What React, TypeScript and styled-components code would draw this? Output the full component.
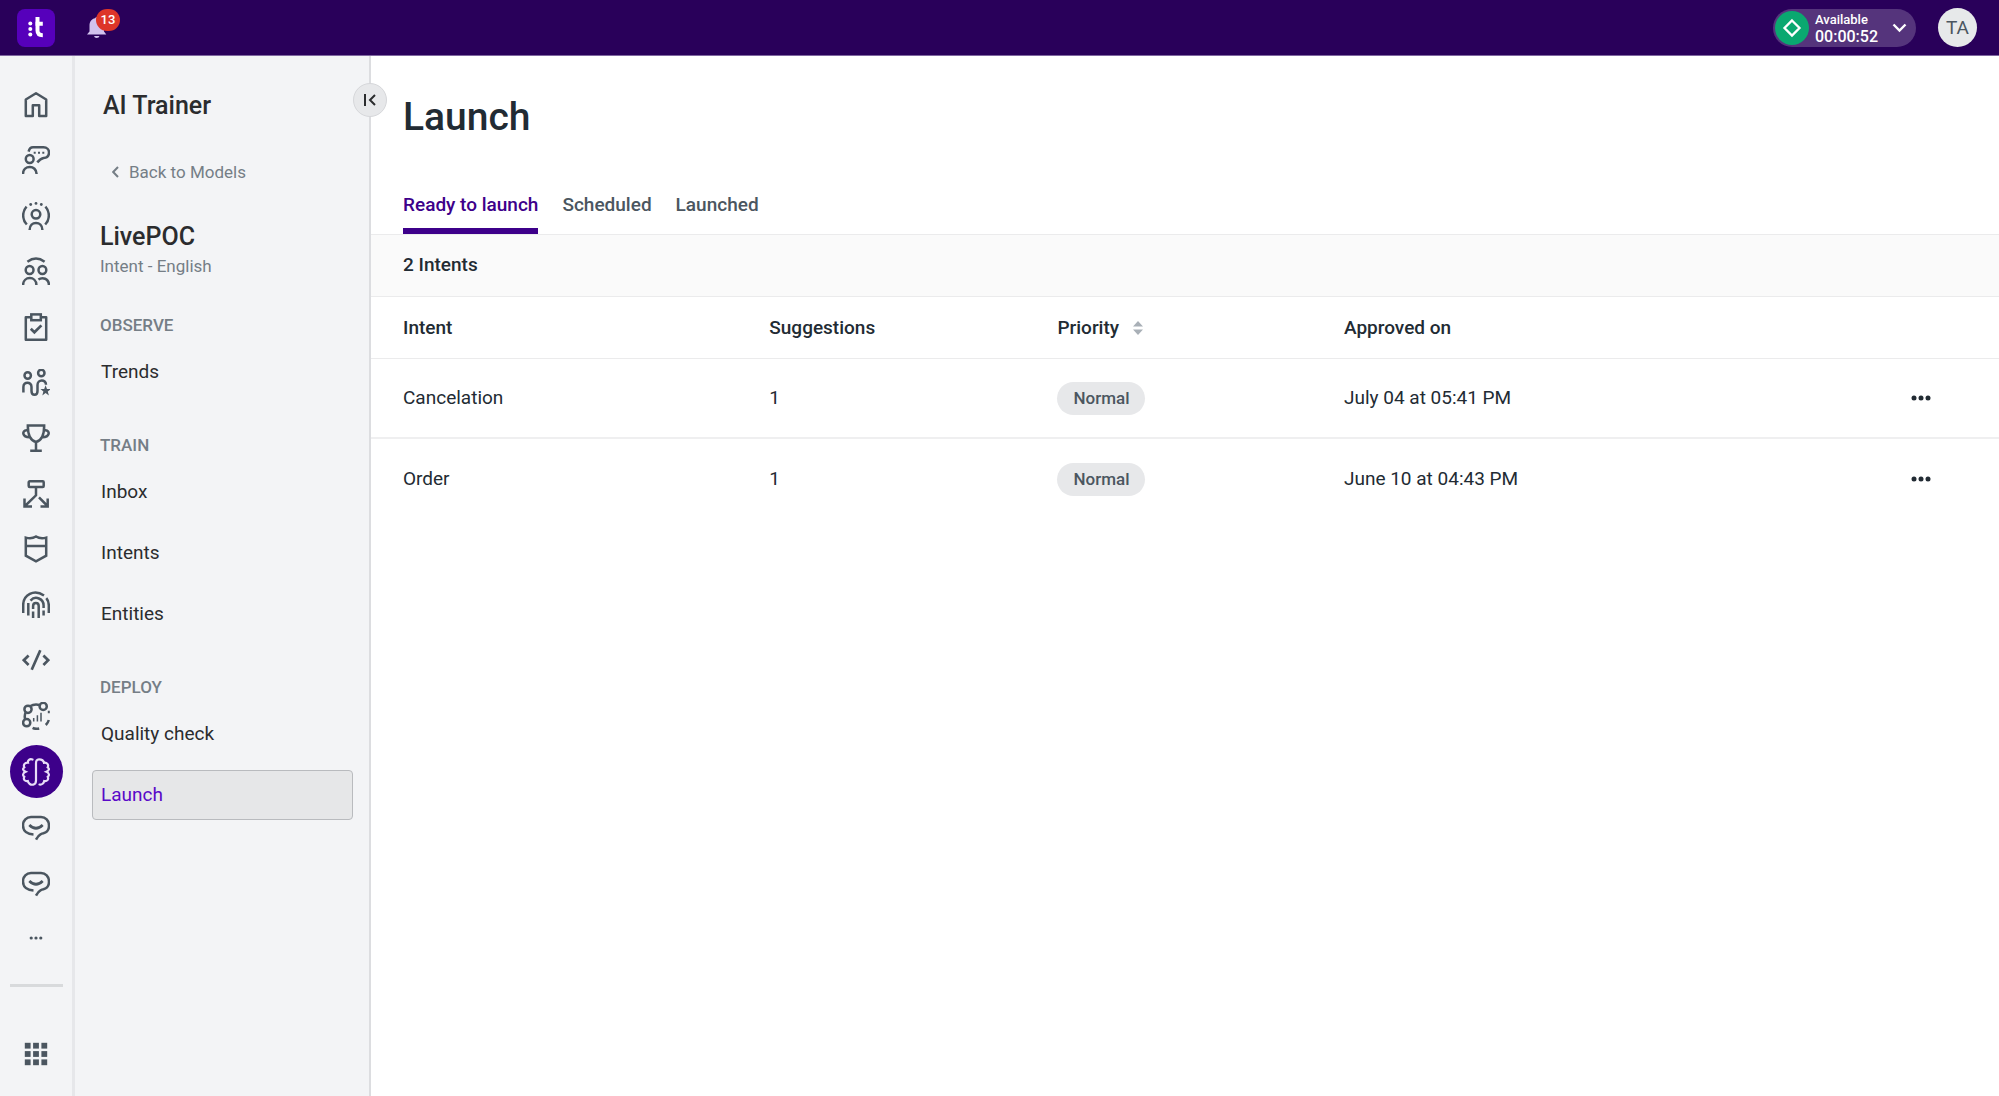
import React from "react";
import styled, { createGlobalStyle } from "styled-components";

const color = {
  header: "#29005a",
  brand: "#3d008a",
  accent: "#5a0ac8",
  panel: "#f3f4f6",
  line: "#ebebec",
  ink: "#222b33",
  text: "#2b2c2e",
  slate: "#4b5660",
  muted: "#757e86",
  chip: "#e7e8ea",
};

const GlobalStyle = createGlobalStyle`
  *, *::before, *::after { box-sizing: border-box; }
  body {
    margin: 0;
    background: #fff;
    color: ${color.ink};
    font-family: Roboto, "Liberation Sans", sans-serif;
    font-size: 19px;
    line-height: 24px;
  }
  button {
    font: inherit;
    color: inherit;
    border: 0;
    padding: 0;
    background: none;
    cursor: pointer;
  }
  a { color: inherit; text-decoration: none; }
  h1, h2, h3, p, ul { margin: 0; padding: 0; }
  ul { list-style: none; }
  svg { display: block; }
`;

const Shell = styled.div`
  display: grid;
  grid-template-rows: 56px 1fr;
  min-height: 100vh;
`;

const TopBar = styled.header`
  display: flex;
  align-items: center;
  justify-content: space-between;
  padding: 0 22px 0 17px;
  background: ${color.header};
  border-bottom: 1px solid #7f66a0;
`;

const TopGroup = styled.div<{ $gap: number }>`
  display: flex;
  align-items: center;
  gap: ${(p) => p.$gap}px;
`;

const Logo = styled.a`
  width: 38px;
  height: 38px;
  border-radius: 8px;
  background: #5600bb;
`;

const BellButton = styled.button`
  position: relative;
  width: 20px;
  height: 38px;
  display: flex;
  align-items: center;
`;

const Badge = styled.span`
  position: absolute;
  left: 9px;
  top: 0;
  width: 24px;
  height: 22px;
  border-radius: 11px;
  background: #dd3529;
  color: #fff;
  font-size: 13px;
  font-weight: 500;
  line-height: 22px;
  text-align: center;
`;

const Status = styled.button`
  display: flex;
  align-items: center;
  height: 38px;
  padding: 0 9px 0 2px;
  border-radius: 19px;
  background: #55347c;
  color: #fff;
  text-align: left;
`;

const StatusDot = styled.span`
  width: 34px;
  height: 34px;
  border-radius: 50%;
  background: #0aa870;
`;

const StatusText = styled.span`
  display: grid;
  width: 64px;
  margin: 0 13px 0 6px;
`;

const StatusLabel = styled.span`
  font-size: 13px;
  font-weight: 500;
  line-height: 17px;
`;

const StatusTime = styled.span`
  font-size: 16px;
  font-weight: 500;
  line-height: 17px;
`;

const Avatar = styled.button`
  width: 39px;
  height: 39px;
  border-radius: 50%;
  background: #e7e9ea;
  color: ${color.slate};
  font-size: 19px;
  text-align: center;
`;

const Body = styled.div`
  display: grid;
  grid-template-columns: 75px 296px 1fr;
`;

const Rail = styled.nav`
  display: flex;
  flex-direction: column;
  align-items: center;
  padding: 21px 0 22px;
  background: ${color.panel};
  border-right: 3px solid #e6e7ea;
  color: ${color.slate};
`;

const RailList = styled.ul`
  flex: 1;
  display: grid;
  grid-auto-rows: 1fr;
  align-items: center;
`;

const RailLink = styled.a<{ $active?: boolean }>`
  display: flex;
  align-items: center;
  justify-content: center;
  width: 53px;
  height: 53px;
  border-radius: 50%;
  background: ${(p) => (p.$active ? color.brand : "transparent")};
  color: ${(p) => (p.$active ? "#e8dcf7" : "inherit")};
`;

const RailDivider = styled.hr`
  width: 53px;
  height: 3px;
  margin: 18px 0 47px;
  border: 0;
  background: #d8dadc;
`;

const AppsButton = styled.button`
  display: flex;
  align-items: center;
  justify-content: center;
  width: 40px;
  height: 40px;
`;

const Side = styled.aside`
  position: relative;
  padding: 36px 16px 36px 17px;
  background: ${color.panel};
  border-right: 2px solid #dcdde0;
`;

const Collapse = styled.button`
  position: absolute;
  top: 27px;
  right: -18px;
  display: flex;
  align-items: center;
  justify-content: center;
  width: 34px;
  height: 34px;
  border: 1px solid #d6d7da;
  border-radius: 50%;
  background: ${color.chip};
  color: ${color.text};
`;

const Heading = styled.h2<{ $indent: number }>`
  padding-left: ${(p) => p.$indent}px;
  color: ${color.text};
  font-size: 25px;
  font-weight: 500;
  line-height: 28px;
`;

const Back = styled.a`
  display: flex;
  align-items: center;
  gap: 10px;
  margin: 41px 0 40px;
  padding-left: 20px;
  color: ${color.muted};
  font-size: 17px;
  line-height: 22px;
`;

const Note = styled.p`
  margin-bottom: 37px;
  padding: 4px 0 0 8px;
  color: ${color.muted};
  font-size: 17px;
  line-height: 22px;
`;

const Section = styled.section`
  display: grid;
  gap: 11px;
  & + & { margin-top: 37px; }
`;

const SectionTitle = styled.h3`
  padding-left: 8px;
  color: ${color.muted};
  font-size: 17px;
  font-weight: 500;
  line-height: 22px;
`;

const SideLink = styled.a<{ $active?: boolean }>`
  display: flex;
  align-items: center;
  height: 50px;
  padding: 0 8px;
  border: 1px solid ${(p) => (p.$active ? "#b9bbbe" : "transparent")};
  border-radius: 4px;
  background: ${(p) => (p.$active ? "#e6e7e8" : "transparent")};
  color: ${(p) => (p.$active ? color.accent : color.text)};
`;

const Main = styled.main`
  min-width: 0;
`;

const Title = styled.h1`
  padding: 37px 32px 0;
  font-size: 39px;
  font-weight: 500;
  line-height: 48px;
`;

const Tabs = styled.div`
  display: flex;
  gap: 24px;
  margin-top: 41px;
  padding: 0 32px;
  border-bottom: 1px solid ${color.line};
`;

const Tab = styled.button<{ $active?: boolean }>`
  height: 52px;
  border-bottom: 6px solid ${(p) => (p.$active ? color.brand : "transparent")};
  color: ${(p) => (p.$active ? color.brand : color.slate)};
  font-weight: 500;
  white-space: nowrap;
`;

const Count = styled.p`
  padding: 18px 32px 19px;
  background: #fafafa;
  border-bottom: 1px solid ${color.line};
  font-weight: 500;
`;

const Table = styled.table`
  width: 100%;
  table-layout: fixed;
  border-collapse: separate;
  border-spacing: 0;
  text-align: left;
`;

const Col = styled.col<{ $share?: number }>`
  width: ${(p) => (p.$share ? `${p.$share}%` : "auto")};
`;

const Th = styled.th`
  height: 62px;
  padding: 0 0 0 32px;
  border-bottom: 1px solid ${color.line};
  font-weight: 500;
`;

const SortButton = styled.button`
  display: flex;
  align-items: center;
  gap: 14px;
`;

const Row = styled.tr`
  &:not(:last-child) > td { border-bottom: 2px solid #efeff0; }
`;

const Td = styled.td<{ $end?: boolean }>`
  height: 80px;
  padding: 0 ${(p) => (p.$end ? 68 : 0)}px 0 32px;
`;

const Chip = styled.span`
  display: inline-block;
  padding: 0 16px;
  border-radius: 17px;
  background: ${color.chip};
  color: ${color.slate};
  font-size: 17px;
  font-weight: 500;
  line-height: 33px;
  vertical-align: middle;
`;

const MoreButton = styled.button`
  display: block;
  margin-left: auto;
  padding: 8px 0;
`;

const Glyph = ({ children, size = 28 }: { children: React.ReactNode; size?: number }) => (
  <svg width={size} height={size} viewBox="0 0 28 28" fill="none" stroke="currentColor" strokeWidth="2.5" aria-hidden="true">
    {children}
  </svg>
);

const chatSmile = (
  <Glyph>
    <path d="M14 26.6Q16 22.6 18.5 21.3Q20 20.6 21.4 20.3C25 19.4 27 16.500 27 12.700C27 7.500 23.500 4 19 4H9C4.500 4 1 7.500 1 12.400C1 17.500 4.500 21 11.500 21.400" />
    <path d="M7.300 12Q14 18.600 20.700 12" strokeWidth="2.700" />
  </Glyph>
);

const railItems: { name: string; active?: boolean; icon: React.ReactNode }[] = [
  {
    name: "Home",
    icon: <Glyph><path d="M3.800 8.500L14 2.300L24.200 8.500V24.900H17.200V14.200H10.800V24.900H3.800Z" strokeLinejoin="round" /></Glyph>,
  },
  {
    name: "Conversations",
    icon: (
      <Glyph>
        <path d="M6.600 5.600Q7.600 1.300 11 1.300H21.500C25 1.300 27 3.700 27 6.500C27 9.500 25 11.800 21.700 12Q18.500 12.400 15.300 16.400" />
        <circle cx="7.700" cy="13" r="3.900" />
        <path d="M1 28C1 18.600 14.600 18.600 14.600 28" />
        <path d="M11.700 6.700h2M16 6.700h2M20.300 6.700h2" strokeWidth="2" />
      </Glyph>
    ),
  },
  {
    name: "Live",
    icon: (
      <Glyph>
        <circle cx="14" cy="12.300" r="4.300" />
        <path d="M7.600 28C7.600 18.500 20.400 18.500 20.400 28M4.600 4.600C0 9.500 0 17.500 4.800 22.500M23.400 4.600C28 9.500 28 17.500 23.200 22.500" />
        <g fill="currentColor" stroke="none"><circle cx="8.700" cy="2.500" r="1.400" /><circle cx="14" cy="1.400" r="1.400" /><circle cx="19.300" cy="2.500" r="1.400" /></g>
      </Glyph>
    ),
  },
  {
    name: "Team",
    icon: (
      <Glyph>
        <path d="M5.400 4.700Q14-1.700 22.600 4.700" />
        <circle cx="7.600" cy="13" r="3.900" /><circle cx="20.400" cy="13" r="3.900" />
        <path d="M1.100 28C1.100 18.800 14.400 18.800 14.400 28M16.400 22.600C20.400 19.600 26.900 21.500 26.900 28" />
      </Glyph>
    ),
  },
  {
    name: "Quality",
    icon: (
      <Glyph>
        <path d="M9.300 4.300H3.800V26.800H24.200V4.300H18.800" strokeLinejoin="round" />
        <rect x="9.300" y="1.400" width="9.500" height="5.800" />
        <path d="M8.800 15.800L12.400 19.300L19.400 12.400" strokeWidth="2.700" />
      </Glyph>
    ),
  },
  {
    name: "Workforce",
    icon: (
      <Glyph>
        <circle cx="5.700" cy="6.500" r="3.200" /><circle cx="19.300" cy="4" r="3.200" />
        <path d="M1.400 23.600V18C1.400 12.200 9.500 12.200 9.500 18V22C9.500 27 15.500 27 15.500 22V16C15.500 10 24 10 24 15.800" />
        <path d="M23.600 16.200L25 20H28.800L25.800 22.400L26.900 26.400L23.600 24.100L20.300 26.400L21.400 22.400L18.400 20H22.200Z" fill="currentColor" stroke="none" />
      </Glyph>
    ),
  },
  {
    name: "Performance",
    icon: (
      <Glyph>
        <path d="M4.600 1.500H23.400M5.800 1.500C5.800 11 8 16.500 14 18C20 16.500 22.200 11 22.200 1.500M14 18V27M8.200 26.700H19.800M6.200 6.200H4.500C-.3 6.800 0 13 7.600 13.200M21.800 6.200H23.500C28.300 6.800 28 13 20.400 13.200" />
      </Glyph>
    ),
  },
  {
    name: "Routing",
    icon: (
      <Glyph>
        <rect x="6.700" y="1.300" width="15" height="5.600" rx="1" />
        <path d="M14 7V15.300L3 26M2.500 18.400V26.400H10M17 17.400L25.500 26M25.700 18.400V26.400H18.500" />
      </Glyph>
    ),
  },
  {
    name: "Guardian",
    icon: (
      <Glyph>
        <path d="M3.800 2.600C8 3.700 11.500 3 14 1.500C16.500 3 20 3.700 24.200 2.600V20.700L14 26.300L3.800 20.700ZM3.800 11H24.200" />
      </Glyph>
    ),
  },
  {
    name: "Identity",
    icon: (
      <Glyph>
        <path d="M1.200 22V14C1.200 4 12-2.500 22 4.600M24.300 7.200Q26.800 10 26.800 14.500V22M6.300 24.400V12M8.500 9.600C13.500 4 21.600 8 21.600 14.500V17M21.600 19.400V24.400M11.100 18V15C11.100 11 16.700 11 16.700 15V27M11.100 20.500V27" />
      </Glyph>
    ),
  },
  {
    name: "Developer",
    icon: <Glyph><path d="M6.600 9.500L1.800 14.200L6.600 19M21.400 9.500L26.200 14.200L21.400 19M18.300 4.300L9.700 23.700" strokeWidth="2.700" /></Glyph>,
  },
  {
    name: "Journeys",
    icon: (
      <Glyph>
        <circle cx="6" cy="7.300" r="3.600" /><circle cx="21.200" cy="4.400" r="3.600" /><circle cx="4.700" cy="20.700" r="3.600" />
        <path d="M8 4.200Q12.500 1.500 17.600 3M3.600 10.400Q2.100 14 3.200 17.300M26.800 18Q26 20.800 23.800 23M17.200 26.500Q13.500 27.400 10.600 25.900M25.800 10h2" />
        <path d="M11.700 16V19.500M15.400 13.200V19.500M19 10.800V19.500" strokeWidth="1.500" />
      </Glyph>
    ),
  },
  {
    name: "AI Trainer",
    active: true,
    icon: (
      <Glyph>
        <path
          strokeWidth="2.200"
          strokeLinecap="round"
          d="M10.500 1.500C7.500.4 5.600 2.600 6 4.600C3 4.300 1 6.800 2.300 9.300C.4 10.600.7 12.600 3.600 13.800C.5 15.200.5 17.600 2.300 18.800C1 21.500 3 23.600 5.800 23C6.300 25.500 8.800 27.300 11.200 26.600C13.500 26 14 24.500 14 22.500V5.500C14 2.800 14.800 1.400 17 1.400C19.500 1.400 21.500 2.200 22 4.800C25 4.300 27 6.800 25.700 9.300C27.600 10.600 27.300 12.600 24.400 13.800C27.500 15.200 27.500 17.600 25.700 18.800C27 21.500 25 23.600 22.200 23C21.800 25.200 20 27 17.500 26.500"
        />
      </Glyph>
    ),
  },
  { name: "Virtual agent", icon: chatSmile },
  { name: "Chatbot", icon: chatSmile },
  {
    name: "More",
    icon: <Glyph><g fill="currentColor" stroke="none"><circle cx="9.200" cy="14" r="1.600" /><circle cx="14" cy="14" r="1.600" /><circle cx="18.800" cy="14" r="1.600" /></g></Glyph>,
  },
];

const sections = [
  { title: "OBSERVE", links: ["Trends"] },
  { title: "TRAIN", links: ["Inbox", "Intents", "Entities"] },
  { title: "DEPLOY", links: ["Quality check", "Launch"] },
];

const intents = [
  { name: "Cancelation", suggestions: 1, priority: "Normal", approved: "July 04 at 05:41 PM" },
  { name: "Order", suggestions: 1, priority: "Normal", approved: "June 10 at 04:43 PM" },
];

export default function App() {
  const [tab, setTab] = React.useState("Ready to launch");
  return (
    <>
      <GlobalStyle />
      <Shell>
        <TopBar>
          <TopGroup $gap={32}>
            <Logo href="#" aria-label="Talkdesk">
              <svg width="38" height="38" viewBox="0 0 38 38" fill="#fff" aria-hidden="true">
                <circle cx="13.300" cy="14.500" r="2" /><circle cx="13.300" cy="20" r="2" /><circle cx="13.300" cy="25.500" r="2" />
                <path d="M20.500 8V21.500Q20.500 26.200 25.800 26.200M18.300 14.700H25.800" fill="none" stroke="#fff" strokeWidth="4" />
              </svg>
            </Logo>
            <BellButton aria-label="Notifications">
              <svg width="20" height="22" viewBox="0 0 20 22" fill="#d2c2ee" aria-hidden="true">
                <path d="M0 17.500L2.500 14.500V8.500C2.500 4.500 5 2 8 1.300C9-.3 11-.3 12 1.300C15 2 17 4.500 17 8.500V14.500L19.300 17.500ZM7 19H12.500Q12 21 9.700 21Q7.500 21 7 19Z" />
              </svg>
              <Badge>13</Badge>
            </BellButton>
          </TopGroup>
          <TopGroup $gap={22}>
            <Status>
              <StatusDot>
                <svg width="34" height="34" viewBox="0 0 34 34" fill="none" stroke="#fff" strokeWidth="2.300" aria-hidden="true">
                  <path d="M17 9.500L24.500 17L17 24.500L9.500 17Z" />
                </svg>
              </StatusDot>
              <StatusText>
                <StatusLabel>Available</StatusLabel>
                <StatusTime>00:00:52</StatusTime>
              </StatusText>
              <svg width="15" height="10" viewBox="0 0 15 10" fill="none" stroke="#fff" strokeWidth="2.400" aria-hidden="true">
                <path d="M1.500 1.500L7.500 7.500L13.500 1.500" />
              </svg>
            </Status>
            <Avatar>TA</Avatar>
          </TopGroup>
        </TopBar>
        <Body>
          <Rail aria-label="Applications">
            <RailList>
              {railItems.map((item) => (
                <li key={item.name}>
                  <RailLink href="#" $active={item.active} aria-label={item.name}>{item.icon}</RailLink>
                </li>
              ))}
            </RailList>
            <RailDivider />
            <AppsButton aria-label="All apps">
              <Glyph>
                <g fill="currentColor" stroke="none">
                  {[2.800, 11.100, 19.400].map((y) => [2.800, 11.100, 19.400].map((x) => (
                    <rect key={`${x}-${y}`} x={x} y={y} width="5.800" height="5.800" />
                  )))}
                </g>
              </Glyph>
            </AppsButton>
          </Rail>
          <Side>
            <Collapse aria-label="Collapse menu">
              <svg width="14" height="14" viewBox="0 0 14 14" fill="none" stroke="currentColor" strokeWidth="2" aria-hidden="true">
                <path d="M2 1V13M12 2L7 7L12 12" />
              </svg>
            </Collapse>
            <Heading $indent={11}>AI Trainer</Heading>
            <Back href="#">
              <svg width="7" height="12" viewBox="0 0 7 12" fill="none" stroke="currentColor" strokeWidth="2" aria-hidden="true">
                <path d="M6 1L1.200 6L6 11" />
              </svg>
              Back to Models
            </Back>
            <Heading $indent={8}>LivePOC</Heading>
            <Note>Intent - English</Note>
            {sections.map((section) => (
              <Section key={section.title}>
                <SectionTitle>{section.title}</SectionTitle>
                {section.links.map((link) => (
                  <SideLink key={link} href="#" $active={link === "Launch"}>{link}</SideLink>
                ))}
              </Section>
            ))}
          </Side>
          <Main>
            <Title>Launch</Title>
            <Tabs role="tablist">
              {["Ready to launch", "Scheduled", "Launched"].map((name) => (
                <Tab key={name} role="tab" aria-selected={name === tab} $active={name === tab} onClick={() => setTab(name)}>
                  {name}
                </Tab>
              ))}
            </Tabs>
            <Count>2 Intents</Count>
            <Table>
              <colgroup>
                <Col $share={22.5} /><Col $share={17.7} /><Col $share={17.6} /><Col /><Col $share={12} />
              </colgroup>
              <thead>
                <tr>
                  <Th>Intent</Th>
                  <Th>Suggestions</Th>
                  <Th>
                    <SortButton>
                      Priority
                      <svg width="10" height="14" viewBox="0 0 10 14" fill="#a9b0b7" aria-hidden="true">
                        <path d="M5 0L10 5.500H0ZM5 14L0 8.500H10Z" />
                      </svg>
                    </SortButton>
                  </Th>
                  <Th>Approved on</Th>
                  <Th aria-label="Actions" />
                </tr>
              </thead>
              <tbody>
                {intents.map((intent) => (
                  <Row key={intent.name}>
                    <Td>{intent.name}</Td>
                    <Td>{intent.suggestions}</Td>
                    <Td><Chip>{intent.priority}</Chip></Td>
                    <Td>{intent.approved}</Td>
                    <Td $end>
                      <MoreButton aria-label={`Actions for ${intent.name}`}>
                        <svg width="20" height="6" viewBox="0 0 20 6" fill="currentColor" aria-hidden="true">
                          <circle cx="3" cy="3" r="2.500" /><circle cx="10" cy="3" r="2.500" /><circle cx="17" cy="3" r="2.500" />
                        </svg>
                      </MoreButton>
                    </Td>
                  </Row>
                ))}
              </tbody>
            </Table>
          </Main>
        </Body>
      </Shell>
    </>
  );
}
